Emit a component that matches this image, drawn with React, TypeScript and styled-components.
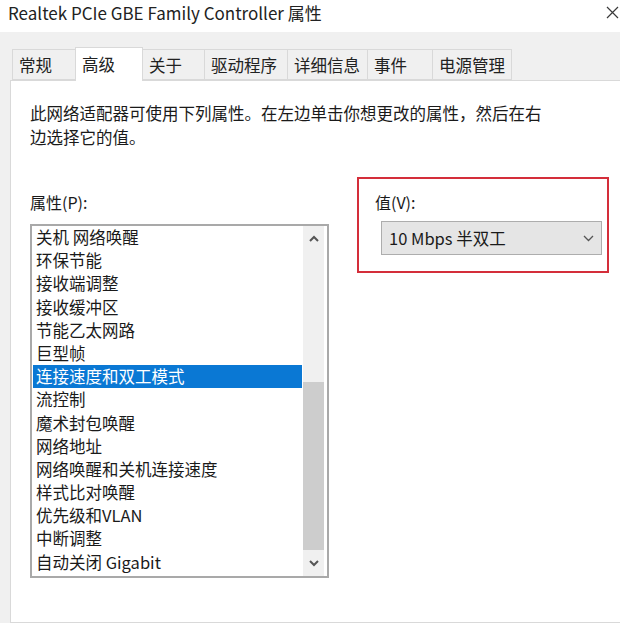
import React from 'react'
import styled, { createGlobalStyle } from 'styled-components'

const FONT = `"Noto Sans CJK SC", "Noto Sans", sans-serif`

const GlobalStyle = createGlobalStyle`
  html, body {
    margin: 0;
    padding: 0;
    background: #f0f0f0;
  }
  body {
    font-family: ${FONT};
  }
`

const tabs = [
  { label: '常规', width: 64 },
  { label: '高级', width: 68, active: true },
  { label: '关于', width: 63 },
  { label: '驱动程序', width: 84 },
  { label: '详细信息', width: 81 },
  { label: '事件', width: 66 },
  { label: '电源管理', width: 80 },
]

const properties = [
  '关机 网络唤醒',
  '环保节能',
  '接收端调整',
  '接收缓冲区',
  '节能乙太网路',
  '巨型帧',
  '连接速度和双工模式',
  '流控制',
  '魔术封包唤醒',
  '网络地址',
  '网络唤醒和关机连接速度',
  '样式比对唤醒',
  '优先级和VLAN',
  '中断调整',
  '自动关闭 Gigabit',
]

const App: React.FC = () => {
  return (
    <>
      <GlobalStyle />
      <Window>
        <TitleBar>
          <Title>Realtek PCIe GBE Family Controller 属性</Title>
          <CloseButton>
            <svg width="13" height="13" viewBox="0 0 13 13">
              <path d="M1 1 L12 12 M12 1 L1 12" stroke="#3a3a3a" strokeWidth="1.2" fill="none" />
            </svg>
          </CloseButton>
        </TitleBar>

        <TabStrip>
          {tabs.map((t) => (
            <Tab key={t.label} $width={t.width} $active={!!t.active}>
              {t.label}
            </Tab>
          ))}
        </TabStrip>

        <Panel>
          <Description>
            此网络适配器可使用下列属性。在左边单击你想更改的属性，然后在右边选择它的值。
          </Description>

          <Columns>
            <LeftCol>
              <FieldLabel>属性(P):</FieldLabel>
              <ListBox>
                <Items>
                  {properties.map((p) => (
                    <Item key={p} $selected={p === '连接速度和双工模式'}>
                      {p}
                    </Item>
                  ))}
                </Items>
                <ScrollBar>
                  <ScrollButton $h={24}>
                    <svg width="10" height="7" viewBox="0 0 10 7">
                      <path d="M1 6 L5 2 L9 6" stroke="#555" strokeWidth="2" fill="none" />
                    </svg>
                  </ScrollButton>
                  <Track>
                    <Thumb />
                  </Track>
                  <ScrollButton $h={26}>
                    <svg width="10" height="7" viewBox="0 0 10 7">
                      <path d="M1 1 L5 5 L9 1" stroke="#555" strokeWidth="2" fill="none" />
                    </svg>
                  </ScrollButton>
                </ScrollBar>
              </ListBox>
            </LeftCol>

            <HighlightBox>
              <FieldLabel>值(V):</FieldLabel>
              <ComboBox>
                <span>10 Mbps 半双工</span>
                <svg width="11" height="7" viewBox="0 0 11 7">
                  <path d="M1 1 L5.5 5.5 L10 1" stroke="#555" strokeWidth="1.3" fill="none" />
                </svg>
              </ComboBox>
            </HighlightBox>
          </Columns>
        </Panel>
      </Window>
    </>
  )
}

const Window = styled.div`
  width: 620px;
  height: 623px;
  overflow: hidden;
  background: #f0f0f0;
  display: flex;
  flex-direction: column;
  color: #1a1a1a;
  font-family: ${FONT};
`

const TitleBar = styled.div`
  height: 32px;
  box-sizing: border-box;
  background: #ffffff;
  display: flex;
  justify-content: space-between;
  align-items: flex-start;
  padding: 2px 1px 0 8px;
`

const Title = styled.div`
  font-size: 17px;
  line-height: 22px;
  color: #222;
  white-space: nowrap;
`

const CloseButton = styled.div`
  margin-top: 4px;
  display: flex;
`

const TabStrip = styled.div`
  display: flex;
  align-items: flex-end;
  margin-top: 15px;
  padding-left: 12px;
  height: 33px;
`

const Tab = styled.div<{ $width: number; $active: boolean }>`
  box-sizing: border-box;
  width: ${(p) => p.$width}px;
  height: ${(p) => (p.$active ? 34 : 31)}px;
  margin-bottom: ${(p) => (p.$active ? -1 : 0)}px;
  margin-right: -1px;
  position: relative;
  z-index: ${(p) => (p.$active ? 1 : 0)};
  background: ${(p) => (p.$active ? '#ffffff' : '#f0f0f0')};
  border: 1px solid #d9d9d9;
  border-bottom: ${(p) => (p.$active ? 'none' : '1px solid #d9d9d9')};
  padding-left: 6px;
  display: flex;
  align-items: ${(p) => (p.$active ? 'flex-start' : 'center')};
  padding-top: ${(p) => (p.$active ? 4 : 0)}px;
  font-size: 16.5px;
  line-height: 24px;
  color: #222;
  white-space: nowrap;
`

const Panel = styled.div`
  flex: 1;
  width: 620px;
  margin-left: 10px;
  background: #ffffff;
  border: 1px solid #d9d9d9;
  padding: 20px 0 0 19px;
`

const Description = styled.div`
  width: 520px;
  font-size: 16.5px;
  line-height: 24px;
`

const Columns = styled.div`
  display: flex;
  align-items: flex-start;
  gap: 28px;
  margin-top: 28px;
`

const LeftCol = styled.div`
  width: 299px;
  padding-top: 13px;
`

const FieldLabel = styled.div`
  font-size: 16px;
  line-height: 24px;
`

const ListBox = styled.div`
  margin-top: 10px;
  box-sizing: border-box;
  height: 354px;
  border: 2px solid #a9a9a9;
  display: flex;
`

const Items = styled.div`
  flex: 1;
  padding: 0 1px;
`

const Item = styled.div<{ $selected: boolean }>`
  height: 23.2px;
  line-height: 23.2px;
  padding-left: 3px;
  font-size: 16.5px;
  white-space: nowrap;
  background: ${(p) => (p.$selected ? '#0a78d4' : 'transparent')};
  color: ${(p) => (p.$selected ? '#ffffff' : '#1a1a1a')};
`

const ScrollBar = styled.div`
  width: 21px;
  margin-right: 3px;
  background: #f0f0f0;
  display: flex;
  flex-direction: column;
`

const ScrollButton = styled.div<{ $h: number }>`
  height: ${(p) => p.$h}px;
  display: flex;
  align-items: center;
  justify-content: center;
`

const Track = styled.div`
  flex: 1;
  display: flex;
  flex-direction: column;
  justify-content: flex-end;
`

const Thumb = styled.div`
  height: 168px;
  background: #cdcdcd;
`

const HighlightBox = styled.div`
  width: 252px;
  box-sizing: border-box;
  border: 2px solid #d42e3a;
  padding: 11px 5px 16px 16px;
`

const ComboBox = styled.div`
  margin-top: 7px;
  margin-left: 6px;
  height: 34px;
  box-sizing: border-box;
  background: #e5e5e5;
  border: 1px solid #adadad;
  display: flex;
  align-items: center;
  justify-content: space-between;
  padding: 0 7px 0 7px;
  font-size: 16.5px;
  color: #1a1a1a;
`

export default App
